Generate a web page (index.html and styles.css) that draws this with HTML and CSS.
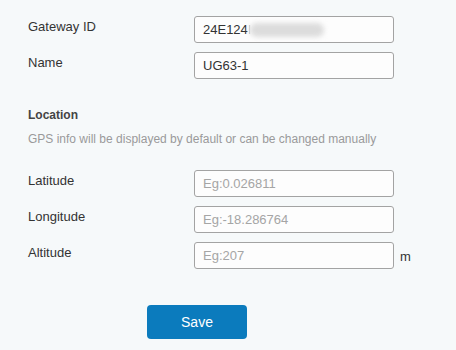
FILE: index.html
```html
<!DOCTYPE html>
<html>
<head>
<meta charset="utf-8">
<link rel="stylesheet" href="styles.css">
</head>
<body>
<form class="form">
  <div class="row">
    <label class="label">Gateway ID</label>
    <div class="field"><div class="input">24E124<span class="masked">I</span><span class="blur"></span></div></div>
  </div>
  <div class="row">
    <label class="label">Name</label>
    <div class="field"><input class="input" type="text" value="UG63-1"></div>
  </div>
  <div class="section">
    <div class="section-title">Location</div>
    <div class="hint">GPS info will be displayed by default or can be changed manually</div>
  </div>
  <div class="row">
    <label class="label">Latitude</label>
    <div class="field"><input class="input" type="text" placeholder="Eg:0.026811"></div>
  </div>
  <div class="row">
    <label class="label">Longitude</label>
    <div class="field"><input class="input" type="text" placeholder="Eg:-18.286764"></div>
  </div>
  <div class="row">
    <label class="label">Altitude</label>
    <div class="field"><input class="input" type="text" placeholder="Eg:207"><span class="unit">m</span></div>
  </div>
  <div class="actions">
    <button type="button" class="btn">Save</button>
  </div>
</form>
</body>
</html>
```
FILE: styles.css
```css
html, body {
  margin: 0;
  padding: 0;
  background: #f6f9fa;
}
body {
  font-family: "Liberation Sans", Arial, sans-serif;
  color: #333;
  width: 456px;
  height: 350px;
  overflow: hidden;
}
.form {
  padding: 16px 0 0 28px;
}
.row {
  display: flex;
  align-items: flex-start;
  margin-bottom: 9px;
}
.label {
  width: 166px;
  font-size: 13px;
  line-height: 21px;
  color: #333;
}
.field {
  display: flex;
  align-items: center;
}
.input {
  box-sizing: border-box;
  width: 200px;
  height: 27px;
  padding: 0 8px;
  border: 1px solid #a3a3a3;
  border-radius: 3px;
  background: #fdfdfd;
  font-family: "Liberation Sans", Arial, sans-serif;
  font-size: 13px;
  color: #333;
  line-height: 25px;
  outline: none;
  margin: 0;
  display: flex;
  align-items: center;
  overflow: hidden;
}
.input::placeholder {
  color: #a5a5a5;
}
.masked {
  color: #999;
  opacity: 0.5;
}
.blur {
  display: inline-block;
  width: 74px;
  height: 14px;
  background: #dcdcdc;
  filter: blur(2.5px);
  border-radius: 7px;
  margin-left: -1px;
}
.unit {
  font-size: 13px;
  margin-left: 6px;
  padding-top: 2px;
  color: #333;
}
.section {
  padding-top: 19px;
  margin-bottom: 23px;
}
.section-title {
  font-size: 12px;
  font-weight: bold;
  line-height: 16px;
  color: #444;
}
.hint {
  margin-top: 8px;
  font-size: 12px;
  line-height: 16px;
  color: #9a9a9a;
}
.actions {
  padding-top: 27px;
  padding-left: 119px;
}
.btn {
  width: 100px;
  height: 34px;
  border: none;
  border-radius: 4px;
  background: #0b7bbd;
  color: #fff;
  font-family: "Liberation Sans", Arial, sans-serif;
  font-size: 14px;
  cursor: pointer;
}
```
